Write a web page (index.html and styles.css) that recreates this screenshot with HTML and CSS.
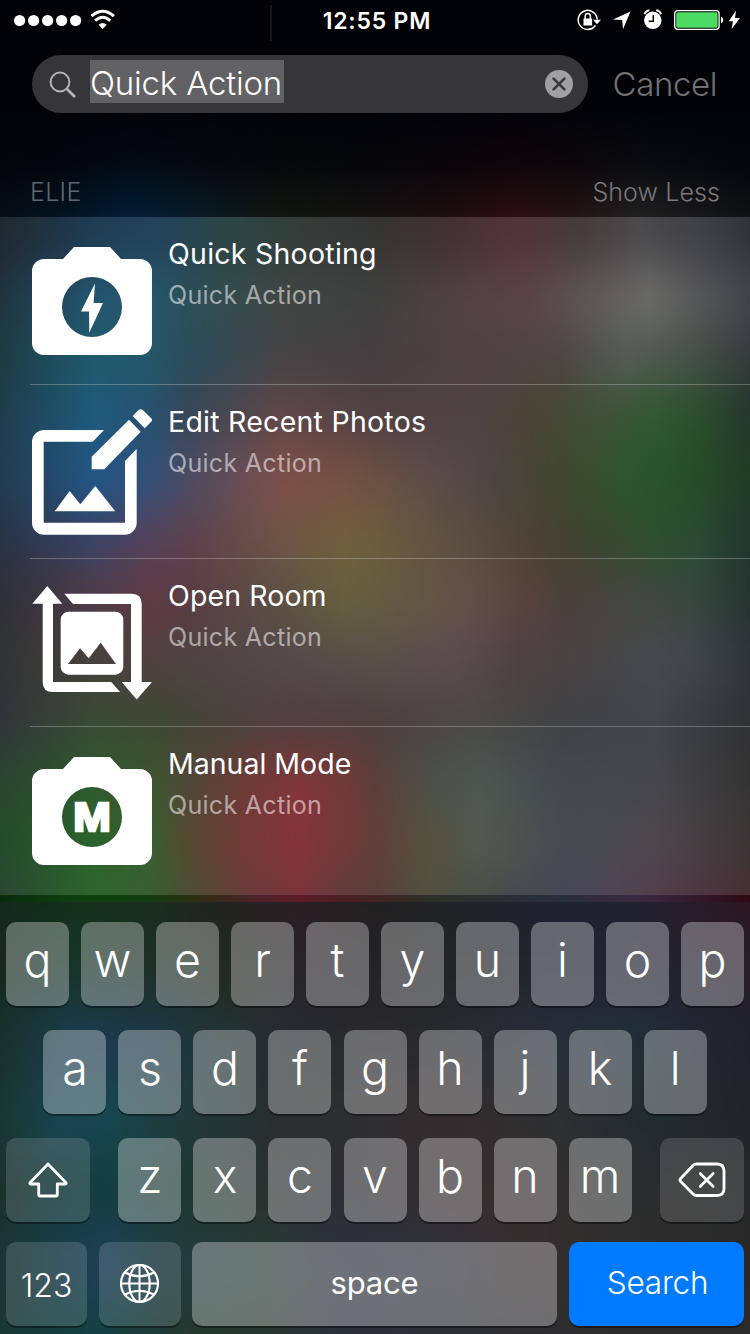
FILE: index.html
```
<!DOCTYPE html>
<html lang="en">
<head>
<meta charset="utf-8">
<title>Search</title>
<link rel="stylesheet" href="styles.css">
</head>
<body>
<svg class="defs" width="0" height="0" aria-hidden="true">
  <filter id="soften" x="0" y="-5%" width="100%" height="110%" color-interpolation-filters="sRGB"><feGaussianBlur stdDeviation="0 24"/></filter>
</svg>
<main class="screen">
  <header class="top">
    <div class="status">
      <div class="status-left">
        <svg width="102" height="24" viewBox="0 0 102 24" fill="#fff">
          <circle cx="5.6" cy="12.5" r="5.6"/><circle cx="19.6" cy="12.5" r="5.6"/><circle cx="33.6" cy="12.5" r="5.6"/><circle cx="47.6" cy="12.5" r="5.6"/><circle cx="61.6" cy="12.5" r="5.6"/>
          <path d="M88.7 21 L84.6 16.7 Q88.7 13.1 92.8 16.7Z"/>
          <path d="M77.5 8.2 Q88.7 -1.8 99.9 8.2M81.1 12.7Q88.7 5.8 96.3 12.7" fill="none" stroke="#fff" stroke-width="3"/>
        </svg>
      </div>
      <span class="divider"></span>
      <div class="time">12:55 PM</div>
      <div class="status-right">
        <svg width="164" height="26" viewBox="0 0 164 26" fill="#fff">
          <path d="M18.4 18.5A9.5 9.5 0 1 1 20.2 12.5" fill="none" stroke="#fff" stroke-width="1.5"/>
          <path d="M16 12.700h8l-4 4.500z"/>
          <path d="M6.500 11.500h8.600v7H6.500z"/><path d="M8.200 12V9.200a2.600 2.600 0 0 1 5.200 0V12" fill="none" stroke="#fff" stroke-width="1.5"/>
          <path d="M53.5 4.500 46 22.200 45.200 12.900 36 12.600Z"/>
          <circle cx="75.800" cy="13.300" r="8.700"/>
          <path d="M67.400 7.200a7 7 0 0 1 5-4M84.200 7.200a7 7 0 0 0-5-4" fill="none" stroke="#fff" stroke-width="1.8"/>
          <path d="M76.300 8v6.300h-4.500" fill="none" stroke="#060608" stroke-width="1.5"/>
          <rect x="97.700" y="3.700" width="44.400" height="18.600" rx="3" fill="none" stroke="#fff" stroke-width="1.3"/>
          <rect x="99.200" y="5.200" width="41.400" height="15.600" rx="1.800" fill="#4cd964"/>
          <path d="M144 9.400q2.200.5 2.200 3.600T144 16.600z"/>
          <path d="M159 3.500 151.800 14.200h4.200L154.500 22.200 163 11h-5z"/>
        </svg>
      </div>
    </div>
    <div class="search-bar">
      <div class="field">
        <svg class="glass" width="28" height="28" viewBox="0 0 28 28" fill="none" stroke="#b4b4b7"><circle cx="11" cy="11" r="9.400" stroke-width="2"/><path d="M17.700 17.700 26 26" stroke-width="2.700"/></svg>
        <span class="query">Quick Action</span>
        <svg class="clear" width="28" height="28" viewBox="0 0 28 28"><circle cx="14" cy="14" r="14" fill="#a0a0a2"/><path d="M8.600 8.600 19.400 19.400M19.400 8.600 8.600 19.400" stroke="#38383a" stroke-width="2.600" stroke-linecap="round"/></svg>
      </div>
      <span class="cancel">Cancel</span>
    </div>
    <div class="section-head"><span class="section-name">ELIE</span><span class="show-less">Show Less</span></div>
  </header>

  <section class="results">
    <div class="mesh"><i class="m1"></i><i class="m2"></i><i class="m3"></i><i class="m4"></i><i class="m5"></i><i class="m6"></i><i class="m7"></i><i class="m8"></i><i class="m9"></i><i class="m10"></i><i class="m11"></i><i class="m12"></i></div>
    <article class="row">
      <svg width="120" height="120" viewBox="0 -6 120 120" fill="#fff">
        <path fill-rule="evenodd" d="M12 12H31L42 0H78L89 12H108A12 12 0 0 1 120 24V96A12 12 0 0 1 108 108H12A12 12 0 0 1 0 96V24A12 12 0 0 1 12 12ZM60 30A30 30 0 1 0 60 90A30 30 0 1 0 60 30Z"/>
        <path d="M63 36.500 61.600 55.900H71L57.300 85.700 57 64.400H49Z"/>
      </svg>
      <div class="copy"><div class="title t1">Quick Shooting</div><div class="sub">Quick Action</div></div>
    </article>
    <article class="row">
      <svg width="120" height="126" viewBox="0 0 120 126" fill="#fff">
        <path d="M72 21H12A12 12 0 0 0 0 33V113.700A12 12 0 0 0 12 125.700H92.700A12 12 0 0 0 104.700 113.700V40L93 52V113.700H11.700V32.700H60.700Z"/>
        <path d="M97 10.700 108.700 22.700 72.300 60.300H59.700V47.700ZM100.700 7 106.300 1.300Q108.600-1 111 1.300L119 9Q121 11 119 13L112.700 19.300Z"/>
        <path d="M22.700 102.300 37.700 82 48.300 95.300 63.300 77 83.300 102.300Z"/>
      </svg>
      <div class="copy"><div class="title t2">Edit Recent Photos</div><div class="sub">Quick Action</div></div>
    </article>
    <article class="row">
      <svg width="120" height="120" viewBox="0 -3 120 120" fill="#fff">
        <path d="M15.300 0 30.300 17.700H21V96H79.300L88 106H20.700Q10.700 106 10.700 96V17.700H.3ZM32.300 7.700H99.700Q109.700 7.700 109.700 17.700V96H120L104.700 113.500 89.700 96H99V18H41Z"/>
        <path fill-rule="evenodd" d="M36.700 25.700H83.300A8 8 0 0 1 91.300 33.700V80.700A8 8 0 0 1 83.300 88.700H36.700A8 8 0 0 1 28.700 80.700V33.700A8 8 0 0 1 36.700 25.700ZM36 78H84L68.700 56.700 56.700 72.300 48 62.300Z"/>
      </svg>
      <div class="copy"><div class="title t3">Open Room</div><div class="sub">Quick Action</div></div>
    </article>
    <article class="row">
      <svg width="120" height="120" viewBox="0 -6 120 120" fill="#fff">
        <path fill-rule="evenodd" d="M12 12H31L42 0H78L89 12H108A12 12 0 0 1 120 24V96A12 12 0 0 1 108 108H12A12 12 0 0 1 0 96V24A12 12 0 0 1 12 12ZM60 30A30 30 0 1 0 60 90A30 30 0 1 0 60 30Z"/>
        <text class="mode" transform="translate(60 73.700) scale(1.1 1)" text-anchor="middle">M</text>
      </svg>
      <div class="copy"><div class="title t4">Manual Mode</div><div class="sub">Quick Action</div></div>
    </article>
  </section>
  <div class="gap"></div>
  <section class="keyboard">
    <div class="mesh"><i class="k1"></i><i class="k2"></i><i class="k3"></i><i class="k4"></i><i class="k5"></i><i class="k6"></i><i class="k7"></i></div>
    <div class="keys top-row"><b>q</b><b>w</b><b>e</b><b>r</b><b>t</b><b>y</b><b>u</b><b>i</b><b>o</b><b>p</b></div>
    <div class="keys"><b>a</b><b>s</b><b>d</b><b>f</b><b>g</b><b>h</b><b>j</b><b>k</b><b>l</b></div>
    <div class="keys spread">
      <b class="dark side"><svg width="40" height="36" viewBox="0 0 40 36" fill="none" stroke="#fff" stroke-width="2.800" stroke-linejoin="round"><path d="M20 2 38 20.700Q38.500 22 37 22H29.300V32.500Q29.300 34 27.800 34H12.200Q10.700 34 10.700 32.500V22H3Q1.500 22 2 20.700Z"/></svg></b>
      <span class="cluster"><b>z</b><b>x</b><b>c</b><b>v</b><b>b</b><b>n</b><b>m</b></span>
      <b class="dark side"><svg width="48" height="36" viewBox="0 0 48 36" fill="none" stroke="#fff" stroke-width="2.800" stroke-linejoin="round"><path d="M18.500 2H39Q46 2 46 9V26.500Q46 33.500 39 33.500H18.500Q16.500 33.500 15 32L2.700 19.400Q1.300 18 2.700 16.500L15 3.500Q16.500 2 18.500 2Z"/><path d="M22.200 11.500 35.200 24.500M35.200 11.500 22.200 24.500" stroke-width="2.600" stroke-linecap="round"/></svg></b>
    </div>
    <div class="keys bottom">
      <b class="dark num">123</b>
      <b class="dark globe"><svg width="40" height="40" viewBox="0 0 40 40" fill="none" stroke="#fff" stroke-width="2.200"><circle cx="19.500" cy="19.500" r="18.500"/><ellipse cx="19.500" cy="19.500" rx="10.200" ry="18.500"/><path d="M19.500 1V38M1 19.500H38M5 8.500Q19.500 16 34 8.500M5 30.500Q19.500 23 34 30.500" stroke-width="2"/></svg></b>
      <b class="space">space</b>
      <b class="go">Search</b>
    </div>
  </section>
</main>
</body>
</html>
```
FILE: styles.css
```
* { box-sizing: border-box; }
body { margin: 0; background: #020307; }
.defs { display: block; position: absolute; }
.screen { width: 750px; height: 1334px; display: flex; flex-direction: column; overflow: hidden; font-family: Inter, "Liberation Sans", sans-serif; color: #fff; }
svg { display: block; flex: none; }

.top {
  height: 217px; display: flex; flex-direction: column;
  background:
    linear-gradient(#020307 0, #020307 105px, rgba(2,3,7,.72) 165px, rgba(2,3,7,0) 217px),
    linear-gradient(90deg, #050d15 0, #04121f 60px, #021d36 130px, #0a1a24 200px, #101610 280px, #151212 375px, #1d0e10 450px, #2c0d11 510px, #231314 570px, #202021 640px, #0f1012 750px);
}
.status { height: 40px; display: grid; grid-template-columns: 270px 2px 1fr; align-items: center; position: relative; }
.status-left { padding-left: 14px; }
.divider { width: 2px; height: 36px; background: #15161a; align-self: end; margin-bottom: -1px; }
.time { position: absolute; left: 0; right: 0; top: 0; text-align: center; font-size: 23px; line-height: 42px; font-weight: 600; letter-spacing: .8px; padding-left: 4px; }
.status-right { justify-self: end; padding-right: 9px; }
.search-bar { margin: 15px 33px 0 32px; display: flex; align-items: center; justify-content: space-between; }
.field { width: 556px; height: 58px; border-radius: 29px; background: #363638; display: flex; align-items: center; padding: 0 15px 0 17px; }
.glass { margin-top: 1px; }
.query { background: #626264; margin-left: 13px; height: 43px; margin-top: -5px; line-height: 47px; font-size: 33px; font-weight: 350; letter-spacing: -.2px; width: 194px; white-space: nowrap; }
.clear { margin-left: auto; }
.cancel { color: #717174; font-size: 33px; font-weight: 350; letter-spacing: -.4px; }
.section-head { margin-top: 62px; padding: 0 30px; display: flex; justify-content: space-between; font-size: 25px; line-height: 34px; font-weight: 350; }
.section-name { color: #5d6670; letter-spacing: .3px; }
.show-less { color: #7b777a; letter-spacing: .1px; }

.results, .keyboard { position: relative; overflow: hidden; isolation: isolate; }
.results { height: 678px; }
.mesh { position: absolute; z-index: -1; left: 0; right: 0; top: -60px; bottom: -60px; display: flex; flex-direction: column; filter: url(#soften); }
.mesh i { flex: 1; }
.mesh i:first-child, .mesh i:last-child { flex: 0 0 92px; }
.results .mesh i:first-child { flex-basis: 110px; }
.results .mesh i:last-child { flex-basis: 82px; }
.m1 { background: linear-gradient(90deg, #20282f 0, #203b52 94px, #22425a 150px, #264350 188px, #2d4440 240px, #333c38 300px, #343433 375px, #42302f 450px, #50333a 510px, #463a3b 580px, #49484a 640px, #3f4044 700px, #303336 750px); }
.m2 { background: linear-gradient(90deg, #1f3440 0, #245672 94px, #25586c 150px, #2c4f58 188px, #3f4744 281px, #404140 375px, #544342 469px, #5c4545 530px, #615d5d 600px, #6e6d6b 650px, #58585a 700px, #44464a 750px); }
.m3 { background: linear-gradient(90deg, #1d3c42 0, #1f5a6c 94px, #235668 150px, #2a4c5a 188px, #454345 281px, #453f41 375px, #4f4141 469px, #4c4642 562px, #535b52 625px, #455047 690px, #333a3b 750px); }
.m4 { background: linear-gradient(90deg, #1f3d4c 0, #1e5a7c 94px, #275070 150px, #384657 188px, #624748 281px, #514144 375px, #4f4245 469px, #4a4334 530px, #3e5038 600px, #2f5830 656px, #2a4d2c 700px, #25372b 750px); }
.m5 { background: linear-gradient(90deg, #223c52 0, #225686 94px, #32507a 150px, #4d4c66 188px, #804f4a 281px, #775045 345px, #6c5044 375px, #5c4c4a 430px, #4a4540 500px, #404730 562px, #2d562c 625px, #274f28 680px, #223c26 750px); }
.m6 { background: linear-gradient(90deg, #2a3344 0, #3a4266 94px, #55415a 150px, #5c414c 188px, #6c5546 281px, #70603e 345px, #6c5d3e 375px, #5a4c42 469px, #4a4035 540px, #3a4630 600px, #2d5030 656px, #2a4a34 700px, #22352f 750px); }
.m7 { background: linear-gradient(90deg, #2e3036 0, #513c46 94px, #613a42 150px, #5a3c44 188px, #5c5044 281px, #66603e 345px, #645c40 375px, #63504a 469px, #5a433e 520px, #4c403a 562px, #464640 625px, #3a4740 690px, #26332f 750px); }
.m8 { background: linear-gradient(90deg, #323434 0, #46413c 94px, #4f403e 150px, #4d4440 188px, #55494a 281px, #58504a 375px, #5c4c4f 450px, #4d4142 520px, #464446 600px, #464a4e 656px, #3e4549 700px, #2f363a 750px); }
.m9 { background: linear-gradient(90deg, #30343a 0, #3a4a36 94px, #3c4834 150px, #424438 188px, #4f3f3f 281px, #4b3f3c 375px, #4a4845 469px, #414244 562px, #424448 656px, #303133 750px); }
.m10 { background: linear-gradient(90deg, #2b4430 0, #2f5a2e 94px, #3c562e 150px, #504738 188px, #703a38 250px, #83353a 300px, #72393a 345px, #5c3f3c 375px, #4c5048 430px, #4b5853 480px, #42484c 562px, #46464a 656px, #353434 750px); }
.m11 { background: linear-gradient(90deg, #234c2a 0, #2a632a 94px, #386030 150px, #55482f 188px, #78383a 250px, #85343a 300px, #74393a 345px, #613e3a 375px, #56523f 430px, #54594f 480px, #464c50 562px, #4d484c 656px, #3a3636 750px); }
.m12 { background: linear-gradient(90deg, #2c4433 0, #2f662f 94px, #385c34 150px, #4a5034 188px, #683b3c 250px, #7a343c 300px, #5c3c3c 345px, #573f3c 375px, #505040 430px, #444c4a 500px, #454556 562px, #4c4658 600px, #543c4a 656px, #4a2c34 750px); }

.row { display: flex; padding: 24px 0 24px 2px; margin-left: 30px; }
.row + .row { box-shadow: 0 -1px 0 rgba(255,255,255,.25); }
.copy { margin-left: 16px; margin-top: -6px; white-space: nowrap; }
.title { font-size: 28.500px; line-height: 38px; letter-spacing: .25px; font-weight: 380; }
.t3 { letter-spacing: .1px; }
.t4 { letter-spacing: 0; }
.sub { font-size: 25px; line-height: 34px; margin-top: 5px; font-weight: 380; letter-spacing: .3px; color: rgba(255,255,255,.54); }
.mode { font: bold 41px "Liberation Sans", sans-serif; stroke: #fff; stroke-width: 2.600px; }

.gap { height: 7px; background: linear-gradient(90deg, #0a2c0c 0, #0d4310 90px, #123c10 150px, #2a3010 190px, #50202a 260px, #5c1c28 300px, #402224 375px, #2c3028 430px, #282e3c 560px, #3b2840 640px, #2c0a14 750px); }

.keyboard { height: 432px; padding: 20px 6px 8px; display: flex; flex-direction: column; }
.k1 { background: linear-gradient(90deg, #14281a 0, #14301a 75px, #1b2d1c 150px, #222220 225px, #2a1f23 300px, #211f20 375px, #202224 450px, #1e2230 560px, #22202e 640px, #2c1720 750px); }
.k2 { background: linear-gradient(90deg, #16291f 0, #17342a 75px, #1c3028 150px, #222a22 225px, #28252a 300px, #242326 375px, #232527 450px, #212533 560px, #222433 640px, #261d28 750px); }
.k3 { background: linear-gradient(90deg, #18312e 0, #1c3c50 70px, #1d384a 150px, #233434 225px, #272a2d 300px, #29292c 375px, #292a2d 450px, #252f3a 560px, #202e38 640px, #20232d 750px); }
.k4 { background: linear-gradient(90deg, #1a3634 0, #1a4450 60px, #17464e 110px, #213a3a 180px, #282e2e 270px, #2f2e30 375px, #332c2e 450px, #2d2f30 560px, #212c2f 640px, #212527 750px); }
.k5 { background: linear-gradient(90deg, #1b302b 0, #16393c 50px, #133e40 100px, #20382f 190px, #2a3230 270px, #2d2e33 340px, #342d2f 450px, #352e2f 520px, #2b2d2e 620px, #272829 750px); }
.k6 { background: linear-gradient(90deg, #1a3735 0, #1b3d4b 60px, #1f4058 110px, #243c3c 190px, #293a35 270px, #2a333d 340px, #30323a 450px, #342f30 510px, #302d2c 620px, #282829 750px); }
.k7 { background: linear-gradient(90deg, #1a3733 0, #134244 95px, #24382f 190px, #283630 270px, #2b313b 340px, #2e3035 450px, #2e2d2f 560px, #2a2a2a 750px); }
.keys, .cluster { display: flex; gap: 12.020px; justify-content: center; }
.keys { margin-bottom: 24px; }
.keys.top-row, .keys.bottom { gap: 12px; }
.spread { justify-content: space-between; margin-bottom: 20px; }
.keys.bottom { margin: 0; justify-content: flex-start; }
.keys b { flex: none; width: 63px; height: 84px; border-radius: 10px; background: rgba(255,255,255,.31); box-shadow: 0 2px 0 rgba(0,0,0,.38); font-size: 46.500px; font-weight: 330; line-height: 76px; text-align: center; }
.keys .dark { background: rgba(255,255,255,.14); display: flex; align-items: center; justify-content: center; }
.keys .side { width: 84px; }
.keys .num { width: 81px; font-size: 32px; font-weight: 350; padding-top: 3px; }
.keys .globe { width: 82px; }
.keys .space { width: 365px; margin-left: -1px; font-size: 31px; line-height: 81px; font-weight: 370; letter-spacing: -.2px; }
.keys .go { width: 175px; background: #007aff; font-size: 31.500px; line-height: 82px; font-weight: 350; letter-spacing: -.2px; padding-left: 2px; }
```
